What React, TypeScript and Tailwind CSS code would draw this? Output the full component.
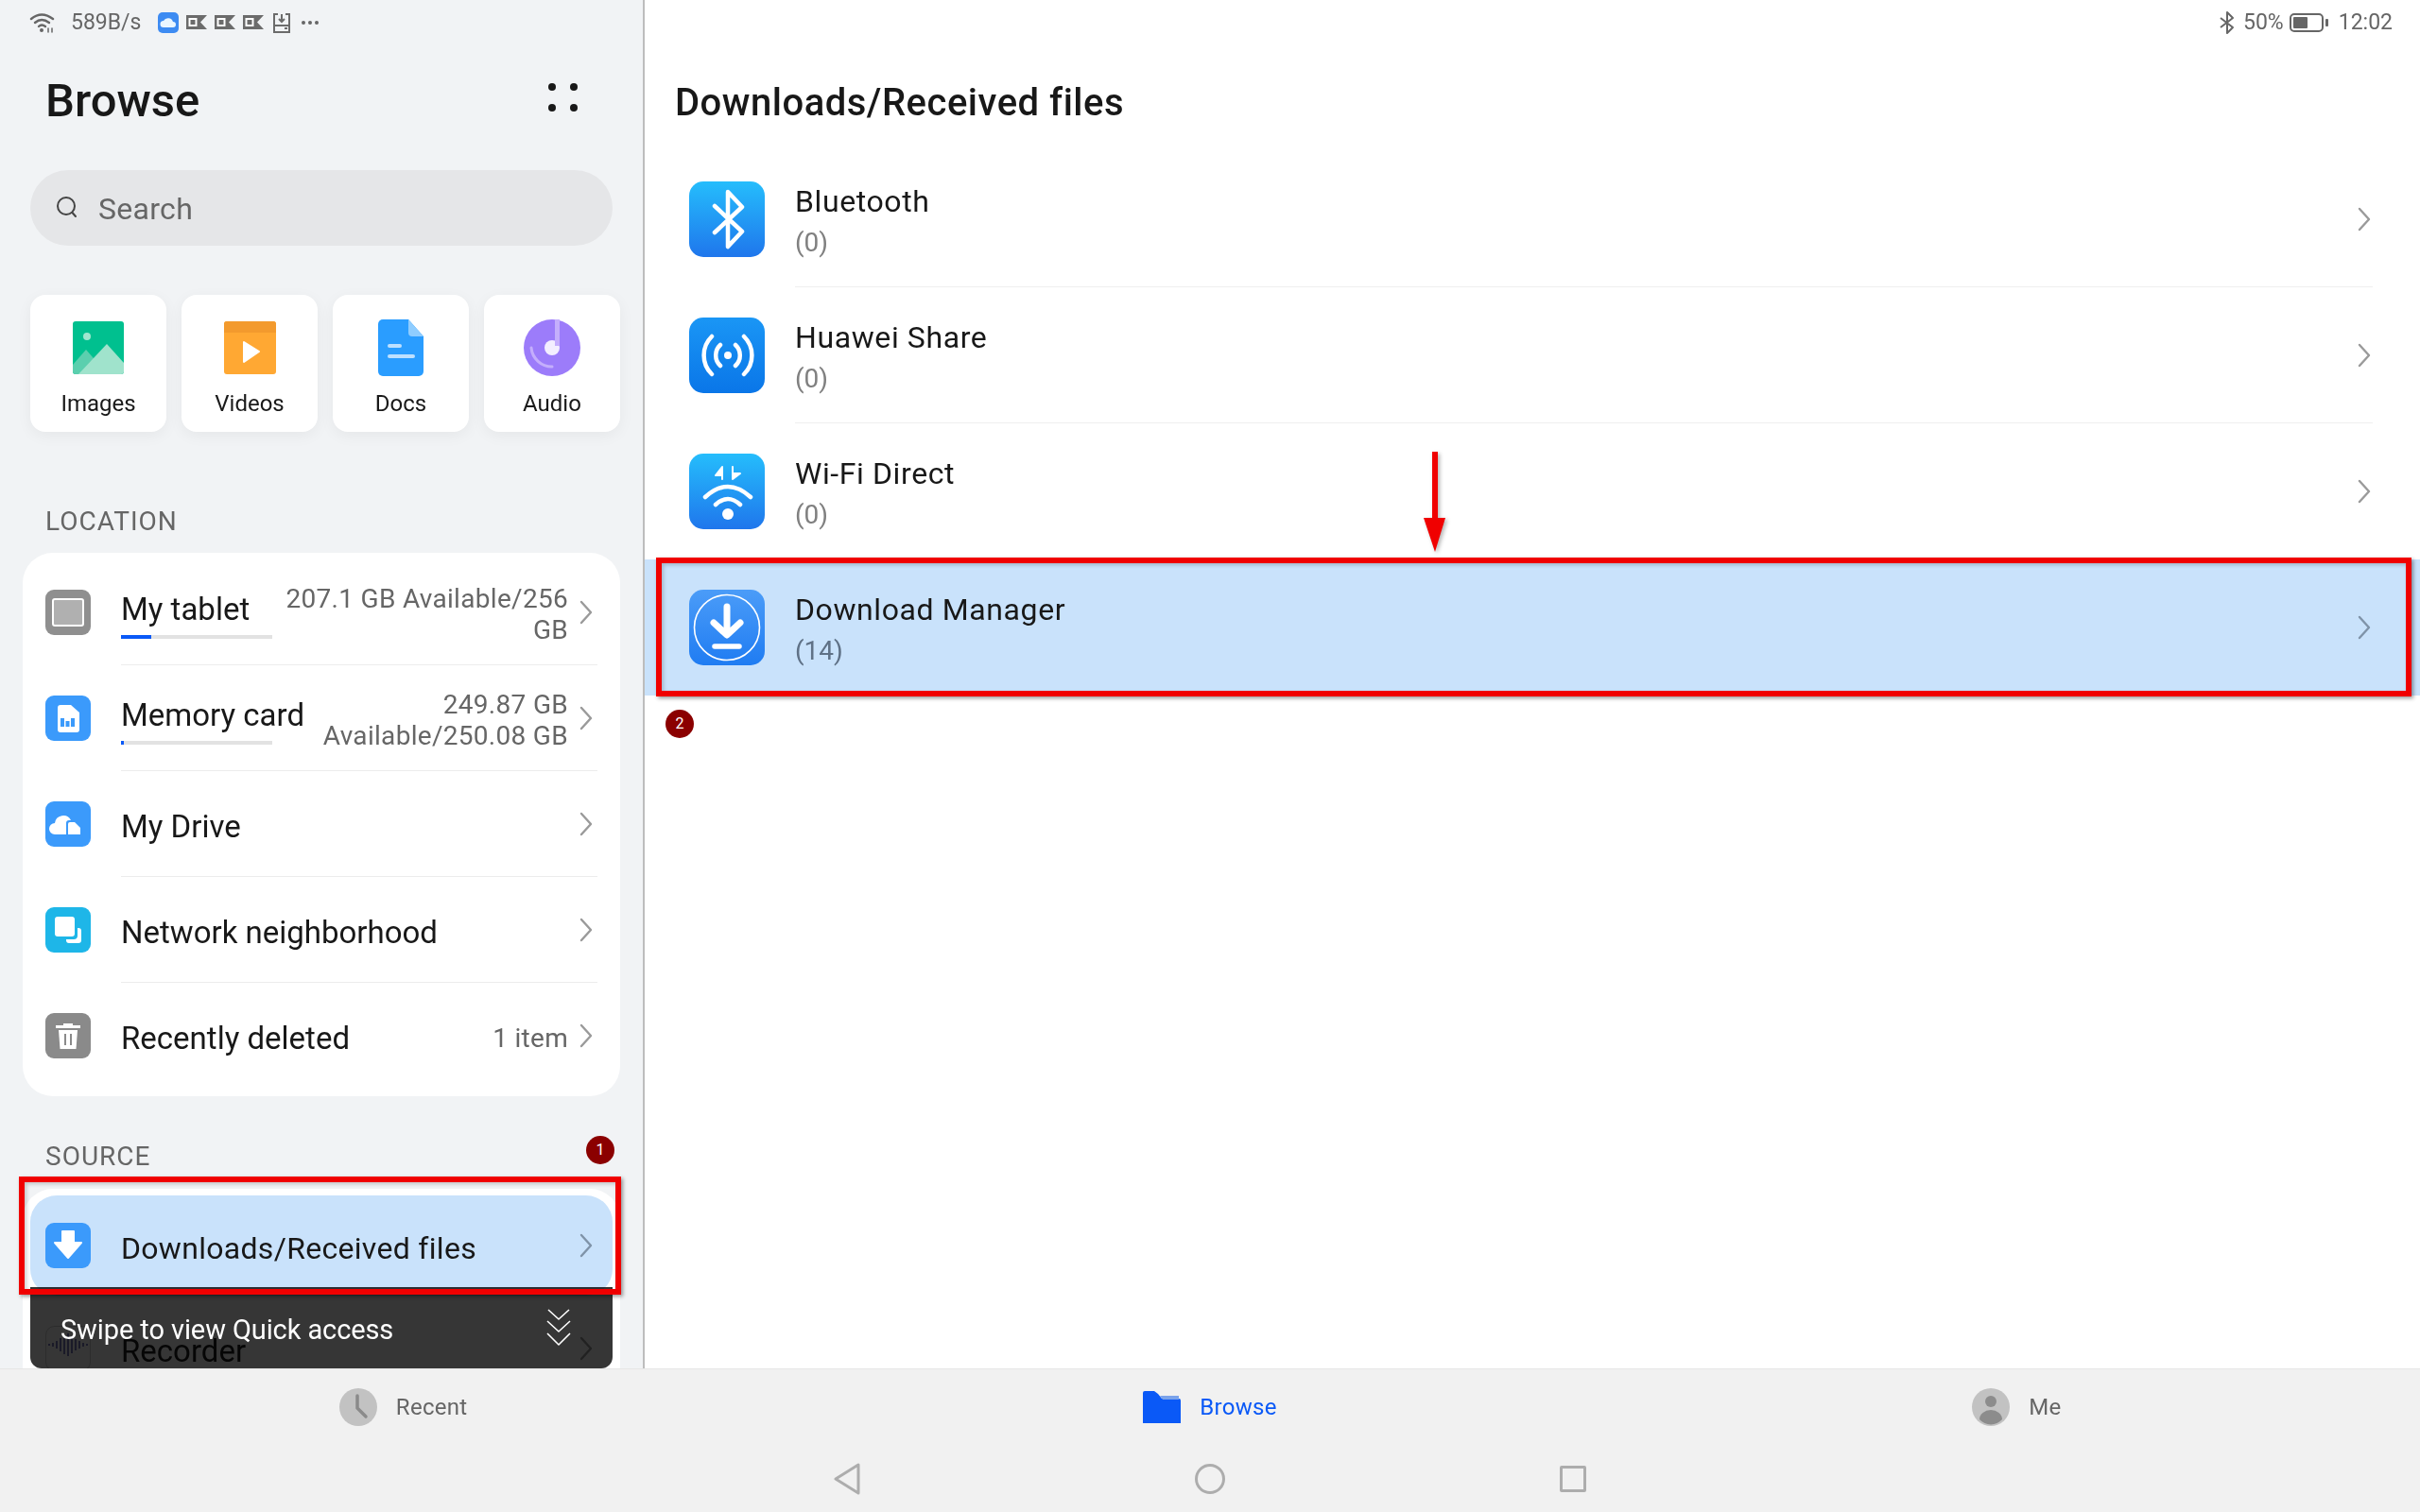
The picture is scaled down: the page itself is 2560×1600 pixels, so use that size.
import type { ReactNode } from "react";

const Chevron = ({ color = "#9a9a9a" }: { color?: string }) => (
  <svg width="14" height="26" viewBox="0 0 14 26" fill="none" className="shrink-0">
    <path d="M2 2 L12 13 L2 24" stroke={color} strokeWidth="2.4" strokeLinecap="round" strokeLinejoin="round" />
  </svg>
);

const Square = ({ bg, children }: { bg: string; children: ReactNode }) => (
  <svg width="48" height="48" viewBox="0 0 48 48" className="shrink-0">
    <rect width="48" height="48" rx="9" fill={bg} />
    {children}
  </svg>
);

const TabletIcon = () => (
  <Square bg="#8f8f8f">
    <rect x="8" y="10" width="32" height="28" rx="2" fill="#b0b0b0" stroke="#fff" strokeWidth="2" />
  </Square>
);

const CardIcon = () => (
  <Square bg="#3b9afb">
    <path d="M13 13 a3 3 0 0 1 3-3 H27 L36 18 V36 a3 3 0 0 1-3 3 H16 a3 3 0 0 1-3-3 Z" fill="#fff" />
    <rect x="16" y="24" width="4" height="9" fill="#3b9afb" />
    <rect x="21.5" y="27" width="4" height="6" fill="#3b9afb" />
    <rect x="27" y="24" width="4" height="9" fill="#3b9afb" />
  </Square>
);

const DriveIcon = () => (
  <Square bg="#3b9afb">
    <path d="M10 35 a6 6 0 0 1 0-12 a9 9 0 0 1 17-3 h-2 a3 3 0 0 0-3 3 V35 Z" fill="#fff" />
    <path d="M24 24 a2 2 0 0 1 2-2 h5 l6 6 V35 H24 Z" fill="#fff" />
  </Square>
);

const NetworkIcon = () => (
  <Square bg="#1eb6e8">
    <rect x="10" y="10" width="21" height="21" rx="3" fill="#fff" />
    <path d="M34 22 h1 a3 3 0 0 1 3 3 v10 a3 3 0 0 1-3 3 h-10 a3 3 0 0 1-3-3 v-1 h8 a4 4 0 0 0 4-4 Z" fill="#fff" />
  </Square>
);

const TrashIcon = () => (
  <Square bg="#8a8a8a">
    <path d="M19 11 h10 v2 h8 v3 H11 v-3 h8 Z" fill="#fff" />
    <path d="M14 18 H34 L32.5 38 H15.5 Z" fill="#fff" />
    <rect x="20" y="22" width="2" height="12" fill="#8a8a8a" />
    <rect x="26" y="22" width="2" height="12" fill="#8a8a8a" />
  </Square>
);

const DownloadSmallIcon = () => (
  <Square bg="#3b9afb">
    <path d="M18 9 H30 V21 H38 L24 37 L10 21 H18 Z" fill="#fff" strokeLinejoin="round" stroke="#fff" strokeWidth="2" />
  </Square>
);

const RecorderIcon = () => (
  <svg width="48" height="48" viewBox="0 0 48 48" className="shrink-0">
    <rect x="0.5" y="0.5" width="47" height="47" rx="9" fill="#fff" stroke="#000" strokeOpacity="0.2" />
    {[4, 8, 12, 16, 20, 24, 28, 32, 36, 40, 44].map((x, i) => {
      const h = [2, 4, 8, 14, 20, 24, 18, 12, 8, 4, 2][i];
      return <rect key={x} x={x - 0.8} y={20 - h / 2} width="1.6" height={h} fill="#5a5aa8" />;
    })}
  </svg>
);

const Big = ({ id, from, to, children }: { id: string; from: string; to: string; children: ReactNode }) => (
  <svg width="80" height="80" viewBox="0 0 80 80" className="shrink-0">
    <defs>
      <linearGradient id={id} x1="0" y1="0" x2="0" y2="1">
        <stop offset="0" stopColor={from} />
        <stop offset="1" stopColor={to} />
      </linearGradient>
    </defs>
    <rect width="80" height="80" rx="15" fill={`url(#${id})`} />
    {children}
  </svg>
);

const white = { stroke: "#fff", fill: "none", strokeLinecap: "round", strokeLinejoin: "round" } as const;

const BluetoothBig = () => (
  <Big id="bt" from="#25bdfc" to="#1f76ec">
    <path d="M27 26 L56 53 L41 69 V11 L56 27 L27 54" {...white} strokeWidth="4.5" />
  </Big>
);

const ShareBig = () => (
  <Big id="hs" from="#1a96f5" to="#0a76e8">
    <circle cx="41" cy="40" r="4" fill="#fff" />
    <path d="M33 29 a15 15 0 0 0 0 22 M49 29 a15 15 0 0 1 0 22" {...white} strokeWidth="4.5" />
    <path d="M24 20 a28 28 0 0 0 0 40 M58 20 a28 28 0 0 1 0 40" {...white} strokeWidth="4.5" />
  </Big>
);

const WifiBig = () => (
  <Big id="wd" from="#25bdfc" to="#1f76ec">
    <path d="M35 27 V14 L28 23 H35 Z M46 14 V27 L54 21 H46 Z" fill="#fff" stroke="#fff" strokeWidth="2" strokeLinejoin="round" />
    <path d="M17 46 Q41 24 65 46" {...white} strokeWidth="4.5" />
    <path d="M28 54 Q41 42 54 54" {...white} strokeWidth="4.5" />
    <circle cx="41" cy="64" r="6" fill="#fff" />
  </Big>
);

const ManagerBig = () => (
  <Big id="dm" from="#4b9cf8" to="#1f7cf2">
    <circle cx="40" cy="40" r="34.5" fill="none" stroke="#fff" strokeWidth="1.6" />
    <path d="M40 18 V47 M26 35 L40 48 L54 35" {...white} strokeWidth="7" />
    <path d="M27 60 H53" {...white} strokeWidth="5.5" />
  </Big>
);

const Tile = ({ label, children }: { label: string; children: ReactNode }) => (
  <div className="w-36 h-[145px] shrink-0 bg-white rounded-2xl shadow-[0_4px_16px_rgba(0,0,0,0.05)] flex flex-col items-center pt-[26px]">
    <div className="h-[60px] flex items-center justify-center">{children}</div>
    <span className="mt-[13px] text-2xl leading-8 text-[#1a1a1a]">{label}</span>
  </div>
);

const Row = ({
  icon,
  name,
  bar,
  side,
  last,
  active,
}: {
  icon: ReactNode;
  name: string;
  bar?: string;
  side?: ReactNode;
  last?: boolean;
  active?: boolean;
}) => (
  <div className={active ? "flex items-center h-[106px] mx-2 pl-4 bg-[#c9e2fb] rounded-[28px]" : "flex items-center h-28 pl-6"}>
    <div className="mr-8">{icon}</div>
    <div
      className={
        active
          ? "flex-1 self-stretch flex items-center min-w-0 mr-4 pr-[5px]"
          : last
            ? "flex-1 self-stretch flex items-center min-w-0 mr-6 pr-[5px]"
            : "flex-1 self-stretch flex items-center min-w-0 mr-6 pr-[5px] border-b border-[#ececec]"
      }
    >
      <div className="relative shrink-0">
        <span
          className={
            (active ? "text-[32px] tracking-[0.3px] " : "text-[33px] ") +
            "block leading-10 text-[#181818] " +
            (bar ? "-mt-[6px]" : "mt-[6px]")
          }
        >
          {name}
        </span>
        {bar && (
          <div className="absolute left-0 top-[41px] w-40 h-1 bg-[#e2e2e2]">
            <div className="h-1 bg-[#0a59f7]" style={{ width: bar }} />
          </div>
        )}
      </div>
      <div className="flex-1 min-w-0 text-right text-[28px] leading-[33px] tracking-[0.3px] text-[#666] pr-3 pl-4 pt-[5px]">{side}</div>
      <Chevron color={active ? "#7f93a8" : "#9a9a9a"} />
    </div>
  </div>
);

const BigRow = ({
  icon,
  name,
  count,
  last,
  active,
}: {
  icon: ReactNode;
  name: string;
  count: string;
  last?: boolean;
  active?: boolean;
}) => (
  <div className={active ? "flex items-center h-36 pl-[47px] bg-[#c9e2fb]" : "flex items-center h-36 pl-[47px]"}>
    <div className="mr-8">{icon}</div>
    <div
      className={
        last
          ? "flex-1 self-stretch flex items-center justify-between mr-[50px] pr-[2px]"
          : "flex-1 self-stretch flex items-center justify-between mr-[50px] pr-[2px] border-b border-[#efefef]"
      }
    >
      <div className="mt-[6px]">
        <div className="text-[32px] leading-[44px] text-[#181818] tracking-[0.6px]">{name}</div>
        <div className={active ? "text-[28px] leading-[44px] text-[#5f7186]" : "text-[28px] leading-[44px] text-[#808080]"}>{count}</div>
      </div>
      <Chevron color={active ? "#7f93a8" : "#9a9a9a"} />
    </div>
  </div>
);

const OkIcon = () => (
  <svg width="22" height="18" viewBox="0 0 22 18">
    <rect x="0" y="1" width="15" height="15" fill="#6b6b6b" />
    <rect x="3.5" y="5" width="7" height="7" fill="none" stroke="#fff" strokeWidth="2" />
    <path d="M12 1 L22 1 L15 8.5 L22 16 L12 16 Z" fill="#6b6b6b" />
  </svg>
);

const Badge = ({ n, className }: { n: string; className: string }) => (
  <div className={"absolute w-[30px] h-[30px] rounded-full bg-[#8b0000] text-white text-[16px] leading-[30px] text-center " + className}>{n}</div>
);

const App = () => {
  return (
    <div className="relative w-[2560px] h-[1600px] overflow-hidden flex flex-col bg-white font-[Roboto,sans-serif]">
      <div className="flex h-[1448px]">
        <aside className="w-[682px] shrink-0 overflow-hidden bg-[#f1f3f5] border-r-2 border-[#bdbdbd]">
          <div className="h-12 flex items-center pl-[31px] text-[#666]">
            <svg width="28" height="24" viewBox="0 0 28 24" fill="none" stroke="#666" strokeWidth="2.4" strokeLinecap="round">
              <path d="M2 8 Q13 -1 25 8" />
              <path d="M6 12 Q13 6 21 12" />
              <path d="M10 16 Q13 13 17 16" />
              <circle cx="13" cy="20" r="2" fill="#666" stroke="none" />
              <path d="M20 18 v4 M24 18 v4" strokeWidth="1.5" />
            </svg>
            <span className="ml-4 text-[23px]">589B/s</span>
            <svg width="22" height="22" viewBox="0 0 22 22" className="ml-[18px]">
              <rect width="22" height="22" rx="5" fill="#3d8bf2" />
              <path d="M6 16 a3.5 3.5 0 0 1 0-7 a5.5 5.5 0 0 1 10 1 a3 3 0 0 1 0 6 Z" fill="#eaf6ff" />
            </svg>
            <div className="ml-2 flex gap-2">
              <OkIcon />
              <OkIcon />
              <OkIcon />
            </div>
            <svg width="18" height="21" viewBox="0 0 18 21" fill="none" stroke="#6b6b6b" strokeWidth="2" className="ml-[10px]">
              <path d="M5 1 H1 V20 H17 V1 H13 M1 13 H17 M9 1 V9 M6 6 L9 9 L12 6" />
              <rect x="12" y="15" width="3" height="2" fill="#6b6b6b" stroke="none" />
            </svg>
            <span className="ml-3 flex gap-[3px]">
              <span className="w-1 h-1 rounded-full bg-[#666]" />
              <span className="w-1 h-1 rounded-full bg-[#666]" />
              <span className="w-1 h-1 rounded-full bg-[#666]" />
            </span>
          </div>

          <div className="h-[118px] flex items-center justify-between pl-12 pr-[69px]">
            <h1 className="text-[49px] font-medium text-[#181818]">Browse</h1>
            <div className="grid grid-cols-2 gap-x-[15px] gap-y-[14px] -mt-2">
              <span className="w-2 h-2 rounded-full bg-[#181818]" />
              <span className="w-2 h-2 rounded-full bg-[#181818]" />
              <span className="w-2 h-2 rounded-full bg-[#181818]" />
              <span className="w-2 h-2 rounded-full bg-[#181818]" />
            </div>
          </div>

          <div className="mt-[14px] mx-8 w-[616px] h-20 rounded-full bg-[#e5e6e8] flex items-center pl-[26px] text-[#666]">
            <svg width="26" height="26" viewBox="0 0 26 26" fill="none" stroke="#444" strokeWidth="2" strokeLinecap="round">
              <circle cx="12" cy="11" r="9" />
              <path d="M18.5 18 L22 22" />
            </svg>
            <span className="ml-5 pt-[2px] text-[32px] tracking-[0.3px] text-[#666]">Search</span>
          </div>

          <div className="mt-[52px] mx-8 flex gap-4">
            <Tile label="Images">
              <svg width="54" height="56" viewBox="0 0 54 56">
                <rect width="54" height="56" rx="3" fill="#00c08f" />
                <circle cx="15" cy="16" r="4" fill="#9fe6cf" />
                <path d="M0 46 L14 30 L28 46 V56 H3 a3 3 0 0 1-3-3 Z" fill="#5bcfae" />
                <path d="M6 56 L36 24 L54 44 V53 a3 3 0 0 1-3 3 Z" fill="#a0e3cc" />
              </svg>
            </Tile>
            <Tile label="Videos">
              <svg width="55" height="56" viewBox="0 0 55 56">
                <rect width="55" height="56" rx="3" fill="#ffa833" />
                <path d="M0 3 a3 3 0 0 1 3-3 H52 a3 3 0 0 1 3 3 V12 H0 Z" fill="#f39a2d" />
                <path d="M21 22 L37 32 L21 43 Z" fill="#fff" stroke="#fff" strokeWidth="2" strokeLinejoin="round" />
              </svg>
            </Tile>
            <Tile label="Docs">
              <svg width="48" height="60" viewBox="0 0 48 60">
                <path d="M0 5 a5 5 0 0 1 5-5 H32 L48 18 V55 a5 5 0 0 1-5 5 H5 a5 5 0 0 1-5-5 Z" fill="#2a9dff" />
                <path d="M32 0 L48 18 H36 a4 4 0 0 1-4-4 Z" fill="#8fcdff" />
                <rect x="10" y="26" width="15" height="4" rx="2" fill="#bde0ff" />
                <rect x="10" y="37" width="29" height="4" rx="2" fill="#bde0ff" />
              </svg>
            </Tile>
            <Tile label="Audio">
              <svg width="60" height="60" viewBox="0 0 60 60">
                <circle cx="30" cy="30" r="30" fill="#9c7cfa" />
                <circle cx="30" cy="30" r="8" fill="#f3eeff" />
                <rect x="33" y="0" width="5" height="28" fill="#c4aefc" />
                <path d="M8 30 A22 22 0 0 0 30 50" fill="none" stroke="#c4aefc" strokeWidth="3" strokeLinecap="round" />
              </svg>
            </Tile>
          </div>

          <div className="mt-[75px] pl-12 h-10 flex items-center text-[28px] tracking-[1px] text-[#666]">LOCATION</div>
          <div className="mt-[13px] mx-6 w-[632px] bg-white rounded-[32px] pt-[7px] pb-2">
            <Row icon={<TabletIcon />} name="My tablet" bar="20%" side={<>207.1 GB Available/256 GB</>} />
            <Row icon={<CardIcon />} name="Memory card" bar="2%" side={<>249.87 GB Available/250.08 GB</>} />
            <Row icon={<DriveIcon />} name="My Drive" />
            <Row icon={<NetworkIcon />} name="Network neighborhood" />
            <Row icon={<TrashIcon />} name="Recently deleted" side="1 item" last />
          </div>

          <div className="mt-[44px] pl-12 h-10 flex items-center text-[28px] tracking-[1px] text-[#666]">SOURCE</div>
          <div className="mt-[14px] mx-6 w-[632px] bg-white rounded-t-[32px] pt-[7px]">
            <Row icon={<DownloadSmallIcon />} name="Downloads/Received files" active />
            <Row icon={<RecorderIcon />} name="Recorder" />
          </div>
        </aside>

        <main className="flex-1">
          <div className="h-12 flex items-center justify-end pr-[29px] text-[23px] text-[#666]">
            <svg width="18" height="26" viewBox="0 0 18 26" fill="none" stroke="#666" strokeWidth="2" strokeLinejoin="round">
              <path d="M2 8 L15 18 L9 24 V2 L15 8 L2 18" />
            </svg>
            <span className="ml-2">50%</span>
            <svg width="42" height="20" viewBox="0 0 42 20" className="ml-[6px]">
              <rect x="1" y="1" width="34" height="18" rx="4" fill="none" stroke="#666" strokeWidth="2" />
              <rect x="4" y="4" width="15" height="12" rx="1" fill="#666" />
              <rect x="38" y="6" width="3" height="8" rx="1" fill="#666" />
            </svg>
            <span className="ml-[10px]">12:02</span>
          </div>
          <div className="h-28 pl-8 pt-[9px] flex items-center">
            <h2 className="text-[40px] font-medium tracking-[0.5px] text-[#181818]">Downloads/Received files</h2>
          </div>
          <BigRow icon={<BluetoothBig />} name="Bluetooth" count="(0)" />
          <BigRow icon={<ShareBig />} name="Huawei Share" count="(0)" />
          <BigRow icon={<WifiBig />} name="Wi-Fi Direct" count="(0)" last />
          <BigRow icon={<ManagerBig />} name="Download Manager" count="(14)" active last />
        </main>
      </div>

      <footer className="h-[152px] bg-[#f1f1f1] border-t border-[#e6e6e6]">
        <div className="h-20 grid grid-cols-3 text-2xl tracking-[0.3px] text-[#666]">
          <div className="flex items-center justify-center gap-5">
            <svg width="40" height="40" viewBox="0 0 40 40">
              <circle cx="20" cy="20" r="20" fill="#c2c2c2" />
              <path d="M19 8 V21 L28 30" fill="none" stroke="#8a8a8a" strokeWidth="3.5" strokeLinecap="round" strokeLinejoin="round" />
            </svg>
            <span>Recent</span>
          </div>
          <div className="flex items-center justify-center gap-5 text-[#0a59f7]">
            <svg width="40" height="34" viewBox="0 0 40 34">
              <path d="M16 3 L20 8 H38 a2 2 0 0 1 2 2 V34 H0 V2 a2 2 0 0 1 2-2 H12 Z" fill="#0a59f7" />
              <path d="M18 5 H38 V9 H21 Z" fill="#7ba3ea" />
            </svg>
            <span>Browse</span>
          </div>
          <div className="flex items-center justify-center gap-5">
            <svg width="40" height="40" viewBox="0 0 40 40">
              <circle cx="20" cy="20" r="20" fill="#c2c2c2" />
              <circle cx="20" cy="14" r="6" fill="#8c8c8c" />
              <path d="M8 33 a12 10 0 0 1 24 0 a16 16 0 0 1-24 0 Z" fill="#8c8c8c" />
            </svg>
            <span>Me</span>
          </div>
        </div>
        <div className="h-[71px] flex justify-center">
          <div className="w-[384px] flex items-center justify-center">
            <svg width="28" height="34" viewBox="0 0 28 34" fill="none" stroke="#adadad" strokeWidth="3" strokeLinejoin="round">
              <path d="M26 2 V32 L2 17 Z" />
            </svg>
          </div>
          <div className="w-[384px] flex items-center justify-center">
            <div className="w-8 h-8 rounded-full border-[3px] border-[#adadad]" />
          </div>
          <div className="w-[384px] flex items-center justify-center">
            <div className="w-7 h-7 rounded-[2px] border-[3px] border-[#adadad]" />
          </div>
        </div>
      </footer>

      {/* toast darkens whatever is under it, the Recorder row still shows through */}
      <div className="absolute left-8 top-[1362px] w-[616px] h-[86px] flex items-center justify-between pl-8 pr-[43px]">
        <div className="absolute inset-0 bg-[#363636] rounded-b-xl mix-blend-multiply" />
        <span className="relative text-[29px] tracking-[-0.1px] text-white pt-[6px]">Swipe to view Quick access</span>
        <svg width="28" height="40" viewBox="0 0 28 40" fill="none" stroke="#fff" strokeWidth="1.6" strokeLinejoin="round" className="relative">
          <path d="M3 1 L14 11 L25 1 M2 13 L14 24 L26 13 M2 26 L14 38 L26 26" />
        </svg>
      </div>

      <div className="absolute left-5 top-[1245px] w-[637px] h-[125px] border-[6px] border-[#f00000] shadow-[2px_2px_4px_rgba(0,0,0,0.4),inset_2px_2px_4px_rgba(0,0,0,0.2)]" />
      <div className="absolute left-[694px] top-[590px] w-[1857px] h-[147px] border-[6px] border-[#f00000] shadow-[2px_2px_4px_rgba(0,0,0,0.4),inset_2px_2px_4px_rgba(0,0,0,0.2)]" />
      <svg width="30" height="110" viewBox="0 0 30 110" className="absolute left-[1503px] top-[477px] drop-shadow-[2px_2px_2px_rgba(0,0,0,0.3)]">
        <path d="M12 1 H18 V71 H26 L15 107 L3 71 H12 Z" fill="#f00000" />
      </svg>
      <Badge n="1" className="left-[620px] top-[1202px]" />
      <Badge n="2" className="left-[704px] top-[751px]" />
    </div>
  );
};

export default App;
